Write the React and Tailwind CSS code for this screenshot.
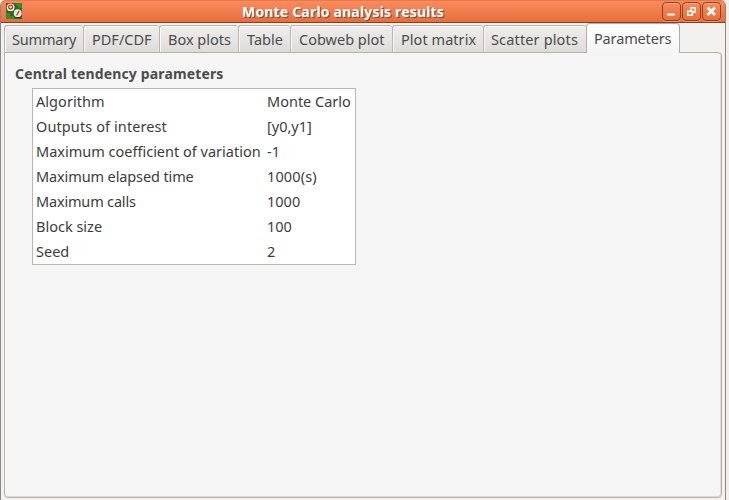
import React from 'react';

const tabs = [
  { label: 'Summary', box: 'w-[79px] pl-[7px]', text: 'tracking-[-0.2px]' },
  { label: 'PDF/CDF', box: 'w-[76px] pl-[8px]', text: 'tracking-[0px]' },
  { label: 'Box plots', box: 'w-[79px] pl-[8px]', text: 'tracking-[0px]' },
  { label: 'Table', box: 'w-[52px] pl-[8px]', text: 'tracking-[0px]' },
  { label: 'Cobweb plot', box: 'w-[102px] pl-[8px]', text: 'tracking-[0px]' },
  { label: 'Plot matrix', box: 'w-[91px] pl-[8px]', text: 'tracking-[0.05px]' },
  { label: 'Scatter plots', box: 'w-[103px] pl-[7px]', text: 'tracking-[0.15px]' },
];

const rows = [
  { name: 'Algorithm', value: 'Monte Carlo', a: 'tracking-[0.05px]', b: 'tracking-[0px]' },
  { name: 'Outputs of interest', value: '[y0,y1]', a: 'tracking-[0.1px]', b: 'tracking-[0px]' },
  { name: 'Maximum coefficient of variation', value: '-1', a: 'tracking-[0px]', b: 'tracking-[0px]' },
  { name: 'Maximum elapsed time', value: '1000(s)', a: 'tracking-[-0.12px]', b: 'tracking-[0.12px]' },
  { name: 'Maximum calls', value: '1000', a: 'tracking-[-0.18px]', b: 'tracking-[0px]' },
  { name: 'Block size', value: '100', a: 'tracking-[0px]', b: 'tracking-[0px]' },
  { name: 'Seed', value: '2', a: 'tracking-[0px]', b: 'tracking-[0px]' },
];

function AppIcon() {
  return (
    <svg className="block h-4 w-4" viewBox="0 0 16 16">
      <rect width="16" height="16" fill="#25701f" />
      <path d="M0 10h4v3h4v3H0zM9 0h7v5h-3z" fill="#388b2d" />
      <circle cx="5.2" cy="5.3" r="3.9" fill="#174713" />
      <circle cx="4.7" cy="4.4" r="3.9" fill="#f1e8df" />
      <circle cx="4.6" cy="4" r="1.9" fill="none" stroke="#d5221d" strokeWidth="1.2" />
      <circle cx="12" cy="11.2" r="3.9" fill="#174713" />
      <circle cx="11.7" cy="10.2" r="3.9" fill="#f1e8df" />
      <path d="M13.3 7.8 10.6 12.4" stroke="#d5221d" strokeWidth="1.2" fill="none" />
    </svg>
  );
}

function WindowButton({ children }) {
  return (
    <div className="h-[19px] w-[19px] rounded-[4px] border border-[#91421f] bg-linear-to-b from-[#f58a5f] to-[#e96e3c] shadow-[inset_0_1px_0_#ffac89,0_1px_0_#f99369]">
      <svg className="block h-[17px] w-[17px]" viewBox="0 0 17 17" fill="none" stroke="#fff">
        {children}
      </svg>
    </div>
  );
}

export default function App() {
  return (
    <div className="flex h-[500px] w-[729px] overflow-hidden bg-[#f1eeec] font-['Noto_Sans','Open_Sans',sans-serif] text-[14.5px] text-[#4c4c4c]">
      <div className="flex w-[726px] flex-col rounded-t-[6px] border-x border-[#8a8785] bg-[#f2f1f0]">
        <div className="flex h-[23px] shrink-0 items-start rounded-t-[5px] border-b border-[#86401f] bg-linear-to-b from-[#fb8d5f] to-[#e96d3b] shadow-[inset_0_1px_0_#e47a4d]">
          <div className="w-[235px] pt-[3px] pl-[5px]">
            <AppIcon />
          </div>
          <div className="flex-1 pl-[6px] text-[14px] leading-[23px] font-bold whitespace-nowrap text-white [text-shadow:1px_1px_0_#7b4a35]">
            <span className="tracking-[0.18px]">Monte Carlo analysis results</span>
          </div>
          <div className="flex gap-px pt-[2px] pr-[4px]">
            <WindowButton>
              <path d="M4 11.5h8" strokeWidth="2" />
            </WindowButton>
            <WindowButton>
              <path d="M8 4.75h4v4.5h-2M8 4v4" strokeWidth="1.5" />
              <path d="M4.75 8.25h4.5v4h-4.5z" strokeWidth="1.5" />
            </WindowButton>
            <WindowButton>
              <path d="m4.5 4.5 7.5 7.5m0-7.5-7.5 7.5" strokeWidth="2.6" />
            </WindowButton>
          </div>
        </div>

        <div className="z-10 flex h-[30px] shrink-0 items-end pl-[3px]">
          {tabs.map((t) => (
            <div
              key={t.label}
              className={`${t.box} mb-px flex h-[27px] shrink-0 items-center rounded-t-[3px] border-t border-l border-[#b9b6b2] bg-linear-to-b from-[#efeeed] to-[#dedcda] leading-[26px] whitespace-nowrap shadow-[inset_1px_1px_0_#f9f9f8]`}
            >
              <span className={t.text}>{t.label}</span>
            </div>
          ))}
          <div className="flex h-[30px] w-[94px] shrink-0 items-center rounded-t-[4px] border-x border-t border-[#b0adaa] bg-linear-to-b from-white to-[#f5f5f5] pl-[7px] whitespace-nowrap">
            <span className="tracking-[-0.15px]">Parameters</span>
          </div>
        </div>

        <div className="mx-[3px] -mt-px h-[446px] w-[718px] rounded-[4px] rounded-tl-none border border-[#b5b1ad] bg-[#f5f5f5] pt-[11px] pl-[10px] shadow-[inset_-1px_-1px_0_#dedbd8,inset_1px_0_0_#fff]">
          <div className="h-[24px] text-[14px] leading-[20px] font-bold whitespace-nowrap">
            <span className="tracking-[0.14px]">Central tendency parameters</span>
          </div>
          <div className="ml-[17px] h-[177px] w-[324px] border border-[#b9b6b3] bg-white text-[#3c3c3c]">
            {rows.map((r) => (
              <div key={r.name} className="flex h-[25px] items-center pl-[3px] whitespace-nowrap">
                <div className="w-[231px] shrink-0">
                  <span className={r.a}>{r.name}</span>
                </div>
                <span className={r.b}>{r.value}</span>
              </div>
            ))}
          </div>
        </div>
      </div>
    </div>
  );
}
